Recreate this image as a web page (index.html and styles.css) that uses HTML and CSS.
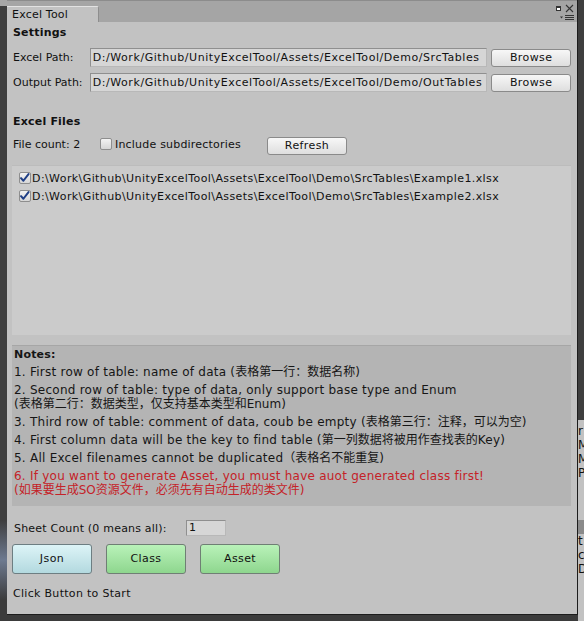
FILE: index.html
```html
<!DOCTYPE html>
<html>
<head>
<meta charset="utf-8">
<link rel="stylesheet" href="styles.css">
</head>
<body>
<div class="screen">
  <div class="window">
    <div class="tabbar">
      <div class="tab">Excel Tool</div>
      <div class="winctl">
        <div class="ctl-top">
          <span class="sq"></span>
          <svg class="x" width="9" height="9" viewBox="0 0 9 9"><path d="M1 1 L8 8 M8 1 L1 8" stroke="#333" stroke-width="1.1" fill="none"/></svg>
        </div>
        <svg class="menu" width="14" height="6" viewBox="0 0 14 6"><path d="M0 1.5 L3 1.5 L1.5 3.5 Z" fill="#333"/><path d="M5 0.5 H14 M5 2.5 H14 M5 4.5 H14" stroke="#333" stroke-width="1"/></svg>
      </div>
    </div>
    <div class="content">
      <div class="heading">Settings</div>
      <div class="pathrow">
        <span class="plabel">Excel Path:</span>
        <div class="field">D:/Work/Github/UnityExcelTool/Assets/ExcelTool/Demo/SrcTables</div>
        <div class="btn browse">Browse</div>
      </div>
      <div class="pathrow">
        <span class="plabel">Output Path:</span>
        <div class="field">D:/Work/Github/UnityExcelTool/Assets/ExcelTool/Demo/OutTables</div>
        <div class="btn browse">Browse</div>
      </div>
      <div class="heading files-heading">Excel Files</div>
      <div class="countrow">
        <span class="count">File count: 2</span>
        <span class="cb"></span>
        <span class="cblabel">Include subdirectories</span>
        <div class="btn refresh">Refresh</div>
      </div>
      <div class="filelist">
        <div class="fileitem"><span class="cb checked"><svg width="12" height="12" viewBox="0 0 12 12"><path d="M2.2 6.2 L4.8 9 L10.4 1.8" stroke="#1f3f86" stroke-width="2.2" fill="none" stroke-linecap="round" stroke-linejoin="round"/></svg></span><span>D:\Work\Github\UnityExcelTool\Assets\ExcelTool\Demo\SrcTables\Example1.xlsx</span></div>
        <div class="fileitem"><span class="cb checked"><svg width="12" height="12" viewBox="0 0 12 12"><path d="M2.2 6.2 L4.8 9 L10.4 1.8" stroke="#1f3f86" stroke-width="2.2" fill="none" stroke-linecap="round" stroke-linejoin="round"/></svg></span><span>D:\Work\Github\UnityExcelTool\Assets\ExcelTool\Demo\SrcTables\Example2.xlsx</span></div>
      </div>
      <div class="notes">
        <div class="notes-title">Notes:</div>
        <div class="note">1. First row of table: name of data (<span class="cn">表格第一行：数据名称</span>)</div>
        <div class="note">2. Second row of table: type of data, only support base type and Enum<br><span class="cn">(表格第二行：数据类型，仅支持基本类型和Enum)</span></div>
        <div class="note">3. Third row of table: comment of data, coub be empty (<span class="cn">表格第三行：注释，可以为空</span>)</div>
        <div class="note">4. First column data will be the key to find table (<span class="cn">第一列数据将被用作查找表的</span>Key)</div>
        <div class="note">5. All Excel filenames cannot be duplicated<span class="cn">（表格名不能重复</span>)</div>
        <div class="note red">6. If you want to generate Asset, you must have auot generated class first!<br><span class="cn">(如果要生成SO资源文件，必须先有自动生成的类文件)</span></div>
      </div>
      <div class="sheetrow">
        <span class="sheetlabel">Sheet Count (0 means all):</span>
        <div class="numfield">1</div>
      </div>
      <div class="actions">
        <div class="abtn json">Json</div>
        <div class="abtn green">Class</div>
        <div class="abtn green">Asset</div>
      </div>
      <div class="status">Click Button to Start</div>
    </div>
  </div>
  <div class="side">
    <div class="side-a"></div>
    <div class="side-b">r<br>M<br>M<br>P</div>
    <div class="side-c">t<br>ce<br>D</div>
  </div>
</div>
</body>
</html>
```
FILE: styles.css
```css
* { box-sizing: border-box; }
html, body { margin: 0; padding: 0; }
body {
  width: 584px;
  height: 621px;
  overflow: hidden;
  background: #4b4b4b;
  font-family: "DejaVu Sans", Verdana, "Noto Sans CJK SC", sans-serif;
  font-size: 11px;
  color: #111;
}
.screen {
  display: flex;
  height: 621px;
  background: linear-gradient(#a6a6a6 0, #a6a6a6 6px, #3e3e3e 6px, #3e3e3e 520px, #6d7a90 560px, #3b3b3b 600px);
}
.window {
  margin-left: 7px;
  width: 571px;
  height: 615px;
  background: #c2c2c2;
  border-right: 1px solid #1c1c1c;
  border-bottom: 1px solid #1c1c1c;
  display: flex;
  flex-direction: column;
}
.tabbar {
  height: 22px;
  background: #a5a5a5;
  display: flex;
  align-items: flex-end;
  border-top: 1px solid #8c8c8c;
}
.tab {
  width: 92px;
  height: 16px;
  background: #c2c2c2;
  border-top: 1px solid #e2e2e2;
  border-right: 1px solid #8e8e8e;
  border-top-right-radius: 2px;
  padding-left: 5px;
  line-height: 15px;
  letter-spacing: 0.2px;
}
.winctl {
  margin-left: auto;
  width: 24px;
  margin-right: 3px;
  align-self: flex-start;
  display: flex;
  flex-direction: column;
  align-items: flex-end;
  padding-top: 3px;
}
.ctl-top { display: flex; align-items: center; gap: 4px; }
.sq { width: 5px; height: 5px; background: #fff; border: 1px solid #333; border-top-width: 2px; }
.menu { margin-top: 2px; }
.content {
  padding: 3px 6px 0 5px;
  flex: 1;
  display: flex;
  flex-direction: column;
}
.heading {
  font-weight: bold;
  height: 16px;
  line-height: 16px;
  padding-left: 1px;
  letter-spacing: 0.2px;
}
.pathrow {
  display: flex;
  align-items: center;
  height: 19px;
  margin-top: 7px;
}
.pathrow + .pathrow { margin-top: 6px; }
.plabel { width: 78px; padding-left: 1px; }
.field {
  width: 399px;
  height: 19px;
  background: #d6d6d6;
  border: 1px solid #8f8f8f;
  border-right-color: #b8b8b8;
  border-bottom-color: #b8b8b8;
  padding-left: 2px;
  line-height: 17px;
  white-space: nowrap;
  overflow: hidden;
  letter-spacing: 0.56px;
}
.btn {
  height: 18px;
  border: 1px solid #8a8a8a;
  border-radius: 3px;
  background: linear-gradient(#f7f7f7, #dedede);
  text-align: center;
  line-height: 16px;
  letter-spacing: 0.4px;
}
.browse { width: 80px; margin-left: 4px; }
.files-heading { margin-top: 22px; }
.countrow {
  display: flex;
  align-items: center;
  height: 18px;
  margin-top: 5px;
}
.count { width: 88px; padding-left: 1px; }
.cb {
  width: 12px;
  height: 12px;
  background: linear-gradient(#f3f3f3, #d6d6d6);
  border: 1px solid #8e8e8e;
  border-radius: 2px;
  display: inline-flex;
  flex: none;
}
.cb svg { margin: -1px 0 0 -1px; }
.cblabel { margin-left: 3px; width: 152px; letter-spacing: 0.2px; }
.refresh { width: 80px; margin-top: 4px; }
.filelist {
  margin-top: 12px;
  height: 170px;
  background: #cbcbcb;
  border-top: 1px solid #bcbcbc;
  padding: 3px 0 0 7px;
  letter-spacing: 0.41px;
}
.fileitem {
  display: flex;
  align-items: center;
  height: 18px;
  gap: 1px;
}
.fileitem .cb { margin-top: -1px; }
.notes {
  margin-top: 10px;
  height: 161px;
  background: #b4b4b4;
  border-top: 1px solid #a6a6a6;
  padding: 1px 0 0 2px;
  font-size: 12px;
  color: #161616;
  letter-spacing: 0.24px;
}
.notes-title { font-weight: bold; font-size: 11px; height: 16px; line-height: 16px; letter-spacing: 0.2px; }
.note { line-height: 14px; padding: 2px 0; }
.note .cn { letter-spacing: 0; line-height: 10px; }
.red { color: #c42228; }
.sheetrow {
  display: flex;
  align-items: center;
  margin-top: 14px;
  height: 16px;
}
.sheetlabel { width: 174px; padding-left: 2px; letter-spacing: 0.2px; }
.numfield {
  width: 40px;
  height: 16px;
  background: #d6d6d6;
  border: 1px solid #8f8f8f;
  border-right-color: #b8b8b8;
  border-bottom-color: #b8b8b8;
  padding-left: 2px;
  line-height: 14px;
}
.actions {
  display: flex;
  gap: 14px;
  margin-top: 8px;
}
.abtn {
  width: 80px;
  height: 30px;
  border: 1px solid #6f7f74;
  border-radius: 3px;
  text-align: center;
  line-height: 28px;
  letter-spacing: 0.4px;
}
.json { background: linear-gradient(#ddf4f7, #b3d9df); border-color: #6d7e82; }
.green { background: linear-gradient(#b9f2b9, #8ed68e); }
.status { margin-top: 13px; padding-left: 1px; line-height: 13px; letter-spacing: 0.3px; }
.side {
  flex: 1;
  display: flex;
  flex-direction: column;
}
.side-a { height: 420px; background: #3e3e3e; }
.side-b { height: 100px; background: #c2c2c2; line-height: 14px; font-size: 12px; overflow: hidden; padding-top: 4px; }
.side-c { flex: 1; background: #c2c2c2; line-height: 14px; font-size: 12px; overflow: hidden; border-top: 14px solid #8a8a8a; }
```
